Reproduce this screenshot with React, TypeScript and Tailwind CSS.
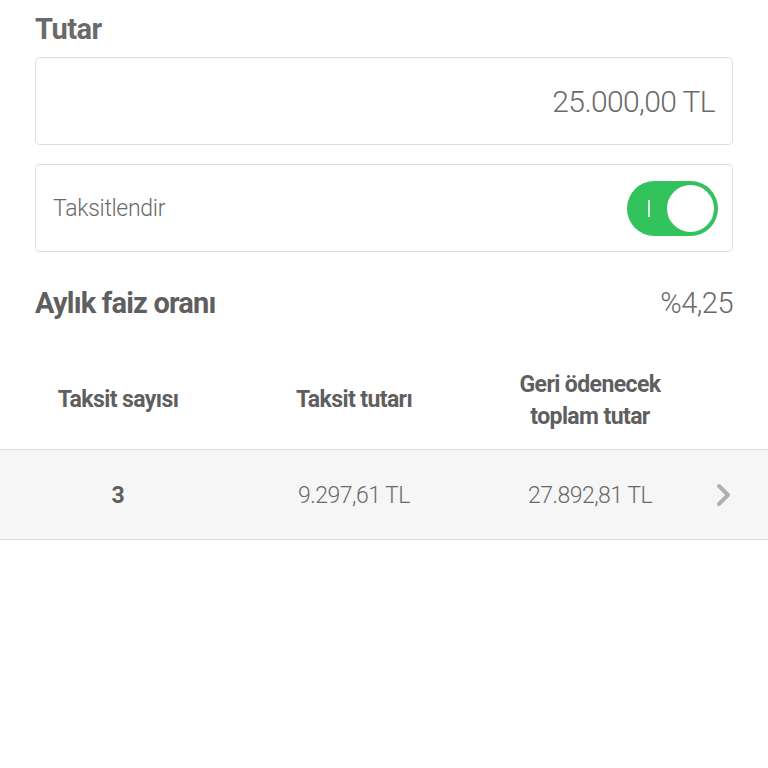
import React from "react";

export default function App() {
  const font = { fontFamily: "Roboto, 'Noto Sans', sans-serif" };
  return (
    <div className="w-[768px] h-[768px] bg-white text-[#666666]" style={font}>
      <div className="px-[35px] pt-[10px]">
        <div className="text-[29px] font-bold leading-[38px] tracking-[-0.5px] text-[#6a6a6a]">Tutar</div>
        <div className="mt-[9px] h-[88px] rounded-[5px] border border-[#dcdcdc] flex items-center justify-end pr-[17px]">
          <span className="text-[30px] font-light tracking-[-0.6px] text-[#6a6a6a]">25.000,00 TL</span>
        </div>
        <div className="mt-[19px] h-[88px] rounded-[5px] border border-[#dcdcdc] flex items-center justify-between pl-[17px] pr-[14px]">
          <span className="text-[23px] font-light tracking-[-0.3px] text-[#6a6a6a] pt-[3px]">Taksitlendir</span>
          <div className="relative w-[91px] h-[55px] rounded-full bg-[#32c35c]">
            <div className="absolute left-[21px] top-[19px] w-[2px] h-[17px] bg-white/80" />
            <div className="absolute right-[2px] top-[2px] w-[51px] h-[51px] rounded-full bg-white border-[2px] border-[#32c35c]" />
          </div>
        </div>
        <div className="mt-[30px] flex items-center justify-between">
          <span className="text-[29px] font-bold tracking-[-0.8px] text-[#5f5f5f]">Aylık faiz oranı</span>
          <span className="text-[29px] font-light tracking-[-0.5px] text-[#6a6a6a]">%4,25</span>
        </div>
      </div>
      <div className="mt-[27px] flex h-[96px] items-center">
        <div className="grid grid-cols-3 items-center w-[708px]">
          <div className="text-center text-[23px] font-bold tracking-[-0.6px] text-[#5f5f5f]">Taksit sayısı</div>
          <div className="text-center text-[23px] font-bold tracking-[-0.6px] text-[#5f5f5f]">Taksit tutarı</div>
          <div className="text-center text-[23px] font-bold tracking-[-0.6px] leading-[32px] text-[#5f5f5f]">
            Geri ödenecek
            <br />
            toplam tutar
          </div>
        </div>
      </div>
      <div className="flex h-[91px] items-center bg-[#f6f6f6] border-y border-[#dedede]">
        <div className="grid grid-cols-3 w-[708px] pt-[4px]">
          <div className="text-center text-[23px] font-bold text-[#5f5f5f]">3</div>
          <div className="text-center text-[23px] font-light tracking-[-0.5px] text-[#6a6a6a]">9.297,61 TL</div>
          <div className="text-center text-[23px] font-light tracking-[-0.5px] text-[#6a6a6a]">27.892,81 TL</div>
        </div>
        <div className="flex-1 flex justify-start pl-[8px] pt-[2px]">
          <svg width="16" height="24" viewBox="0 0 16 24">
            <path d="M3 3 L12 12 L3 21" fill="none" stroke="#b0b0b0" strokeWidth="4" strokeLinecap="round" strokeLinejoin="round" />
          </svg>
        </div>
      </div>
    </div>
  );
}
